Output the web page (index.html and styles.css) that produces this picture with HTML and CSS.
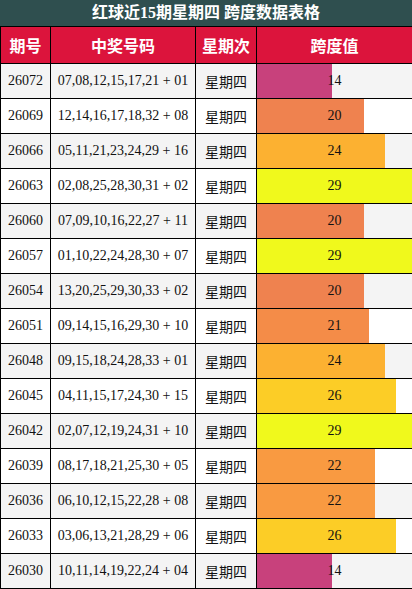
FILE: index.html
```html
<!DOCTYPE html>
<html lang="zh">
<head>
<meta charset="utf-8">
<title>红球近15期星期四 跨度数据表格</title>
<link rel="stylesheet" href="styles.css">
</head>
<body>
<div class="title">红球近15期星期四 跨度数据表格</div>
<table class="grid">
  <colgroup>
    <col class="c-issue"><col class="c-nums"><col class="c-day"><col class="c-span">
  </colgroup>
  <thead>
    <tr><th>期号</th><th>中奖号码</th><th>星期次</th><th>跨度值</th></tr>
  </thead>
  <tbody>
    <tr><td>26072</td><td>07,08,12,15,17,21 + 01</td><td>星期四</td><td class="span" style="--w:48.28%;--c:#c8417c">14</td></tr>
    <tr><td>26069</td><td>12,14,16,17,18,32 + 08</td><td>星期四</td><td class="span" style="--w:68.97%;--c:#ef824f">20</td></tr>
    <tr><td>26066</td><td>05,11,21,23,24,29 + 16</td><td>星期四</td><td class="span" style="--w:82.76%;--c:#fcb131">24</td></tr>
    <tr><td>26063</td><td>02,08,25,28,30,31 + 02</td><td>星期四</td><td class="span" style="--w:100%;--c:#f0f91c">29</td></tr>
    <tr><td>26060</td><td>07,09,10,16,22,27 + 11</td><td>星期四</td><td class="span" style="--w:68.97%;--c:#ef824f">20</td></tr>
    <tr><td>26057</td><td>01,10,22,24,28,30 + 07</td><td>星期四</td><td class="span" style="--w:100%;--c:#f0f91c">29</td></tr>
    <tr><td>26054</td><td>13,20,25,29,30,33 + 02</td><td>星期四</td><td class="span" style="--w:68.97%;--c:#ef824f">20</td></tr>
    <tr><td>26051</td><td>09,14,15,16,29,30 + 10</td><td>星期四</td><td class="span" style="--w:72.41%;--c:#f48c48">21</td></tr>
    <tr><td>26048</td><td>09,15,18,24,28,33 + 01</td><td>星期四</td><td class="span" style="--w:82.76%;--c:#fcb131">24</td></tr>
    <tr><td>26045</td><td>04,11,15,17,24,30 + 15</td><td>星期四</td><td class="span" style="--w:89.66%;--c:#fccd26">26</td></tr>
    <tr><td>26042</td><td>02,07,12,19,24,31 + 10</td><td>星期四</td><td class="span" style="--w:100%;--c:#f0f91c">29</td></tr>
    <tr><td>26039</td><td>08,17,18,21,25,30 + 05</td><td>星期四</td><td class="span" style="--w:75.86%;--c:#f99a41">22</td></tr>
    <tr><td>26036</td><td>06,10,12,15,22,28 + 08</td><td>星期四</td><td class="span" style="--w:75.86%;--c:#f99a41">22</td></tr>
    <tr><td>26033</td><td>03,06,13,21,28,29 + 06</td><td>星期四</td><td class="span" style="--w:89.66%;--c:#fccd26">26</td></tr>
    <tr><td>26030</td><td>10,11,14,19,22,24 + 04</td><td>星期四</td><td class="span" style="--w:48.28%;--c:#c8417c">14</td></tr>
  </tbody>
</table>
</body>
</html>
```

FILE: styles.css
```css
html, body {
  margin: 0;
  padding: 0;
  background: #ffffff;
}

body {
  width: 412px;
  font-family: "Liberation Serif", "Noto Sans CJK SC", serif;
  color: #111;
}

.title {
  height: 26px;
  line-height: 26px;
  background: #2f4f4f;
  color: #ffffff;
  font-size: 16px;
  font-weight: bold;
  text-align: center;
}

.grid {
  width: 412px;
  border-collapse: collapse;
  table-layout: fixed;
}

.c-issue { width: 50px; }
.c-nums { width: 145px; }
.c-day { width: 61px; }
.c-span { width: 156px; }

.grid th,
.grid td {
  border: 1px solid #000;
  padding: 0;
  text-align: center;
  vertical-align: middle;
  white-space: nowrap;
}

.grid th {
  height: 36px;
  background: #dc143c;
  color: #ffffff;
  font-size: 16px;
  font-weight: bold;
}

.grid td {
  height: 34px;
  font-size: 14px;
}

.grid tbody tr:nth-child(odd) td {
  background-color: #f4f4f4;
}

.grid tbody tr:nth-child(even) td {
  background-color: #ffffff;
}

.grid tbody tr td.span {
  background-image: linear-gradient(to right, var(--c) var(--w), transparent var(--w));
  background-repeat: no-repeat;
}
```
